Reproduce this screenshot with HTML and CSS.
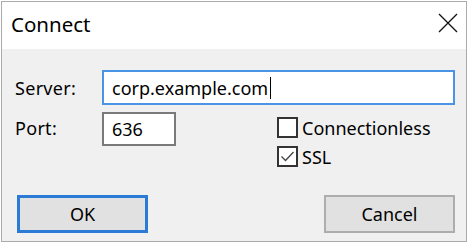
FILE: index.html
```html
<!DOCTYPE html>
<html>
<head>
<meta charset="utf-8">
<link rel="stylesheet" href="styles.css">
</head>
<body>
<div class="window">
  <div class="titlebar">
    <span class="title">Connect</span>
    <svg class="close" width="20" height="20" viewBox="0 0 20 20"><path d="M1 1 L19 19 M19 1 L1 19" stroke="#111" stroke-width="1.3" fill="none"/></svg>
  </div>
  <div class="content">
    <div class="row server-row">
      <label class="label">Server:</label>
      <div class="input server-input focused"><span>corp.example.com</span><span class="caret"></span></div>
    </div>
    <div class="row port-row">
      <label class="label port-label">Port:</label>
      <div class="input port-input"><span>636</span></div>
      <div class="checks">
        <div class="check"><span class="box"></span><span>Connectionless</span></div>
        <div class="check"><span class="box"><svg width="17" height="17" viewBox="0 0 17 17"><path d="M2.5 8.5 L6.5 12.5 L14.5 4" stroke="#444" stroke-width="1.3" fill="none"/></svg></span><span>SSL</span></div>
      </div>
    </div>
    <div class="buttons">
      <button class="btn default">OK</button>
      <button class="btn">Cancel</button>
    </div>
  </div>
</div>
</body>
</html>
```
FILE: styles.css
```css
html, body {
  margin: 0;
  padding: 0;
  background: #fff;
}
body {
  font-family: "Noto Sans", "Open Sans", sans-serif;
  color: #000;
}
.window {
  margin: 1px 0 0 1px;
  width: 466px;
  height: 241px;
  box-sizing: border-box;
  border: 1px solid #ababab;
  display: flex;
  flex-direction: column;
}
.titlebar {
  height: 47px;
  flex: none;
  background: #fff;
  display: flex;
  align-items: center;
  justify-content: space-between;
  padding: 0 8px 0 9px;
}
.title {
  font-size: 20.5px;
  margin-top: -4px;
}
.close {
  margin-top: -6px;
}
.content {
  flex: 1;
  background: #f0f0f0;
  padding: 21px 10px 0 13px;
  display: flex;
  flex-direction: column;
}
.row {
  display: flex;
}
.label {
  width: 87px;
  font-size: 18px;
  letter-spacing: 0.3px;
}
.server-row {
  align-items: center;
  height: 35px;
}
.input {
  box-sizing: border-box;
  background: #fff;
  border: 2px solid #7a7a7a;
  font-size: 18px;
  padding-left: 8px;
  display: flex;
  align-items: center;
}
.input.focused {
  border-color: #4a94e6;
}
.server-input {
  width: 353px;
  height: 35px;
}
.caret {
  width: 1px;
  height: 22px;
  background: #000;
  margin-left: 2px;
}
.port-row {
  margin-top: 7px;
  align-items: flex-start;
}
.port-label {
  padding-top: 4px;
}
.port-input {
  width: 74px;
  height: 34px;
}
.checks {
  margin-left: 101px;
  margin-top: 5px;
  display: flex;
  flex-direction: column;
  gap: 8px;
  font-size: 18px;
}
.check {
  display: flex;
  align-items: center;
  height: 21px;
  gap: 4px;
}
.box {
  box-sizing: border-box;
  width: 21px;
  height: 21px;
  border: 2px solid #333;
  background: #fff;
  display: flex;
  align-items: center;
  justify-content: center;
}
.buttons {
  margin-top: 28px;
  display: flex;
  justify-content: space-between;
  padding-left: 2px;
  padding-right: 1px;
}
.btn {
  box-sizing: border-box;
  width: 131px;
  height: 38px;
  background: #e1e1e1;
  border: 2px solid #adadad;
  font-family: "Noto Sans", "Open Sans", sans-serif;
  font-size: 18px;
  color: #000;
  padding: 0;
}
.btn.default {
  border: 3px solid #2b7ad6;
}
```
